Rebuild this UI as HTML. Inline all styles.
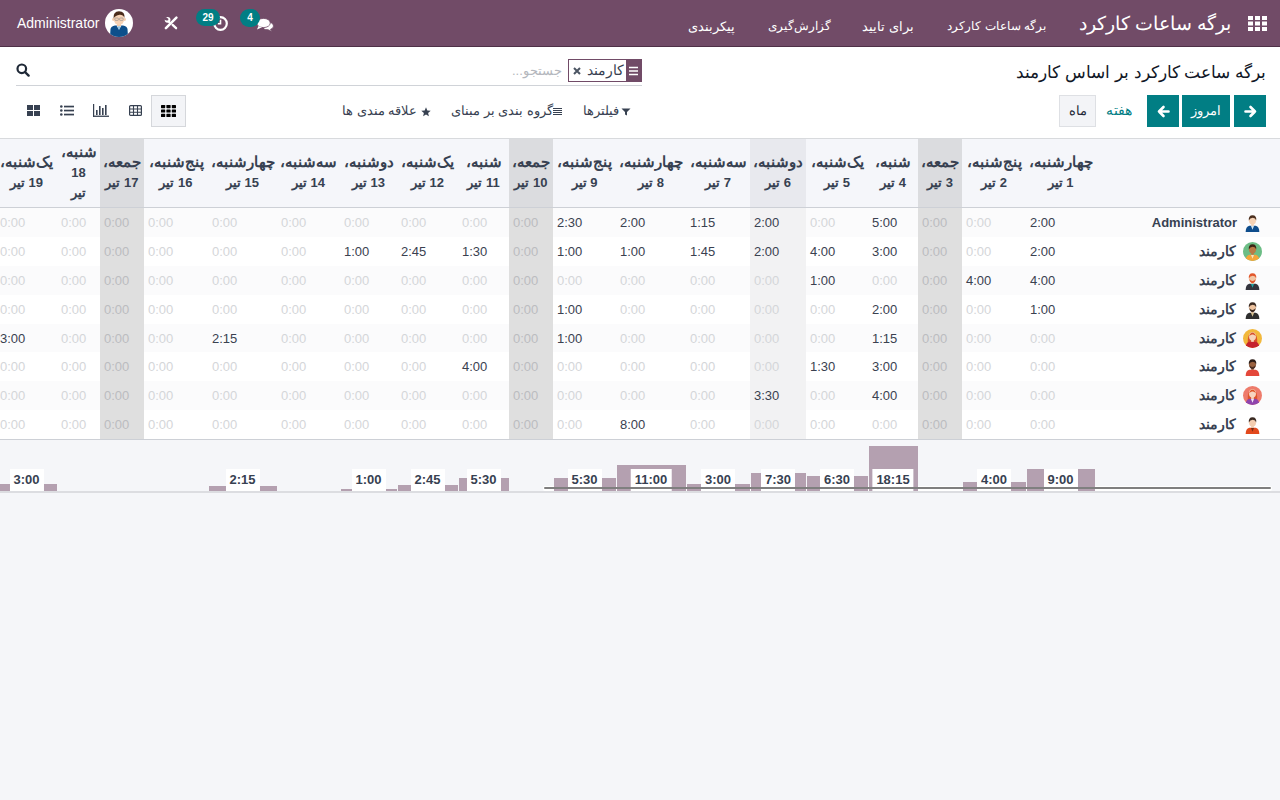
<!DOCTYPE html>
<html lang="fa">
<head>
<meta charset="utf-8">
<style>
*{box-sizing:border-box;margin:0;padding:0}
html,body{width:1280px;height:800px;overflow:hidden}
body{font-family:"Liberation Sans",sans-serif;font-size:13px;color:#374151;background:#f5f6f9;position:relative}
.nav{position:absolute;left:0;top:0;width:1280px;height:47px;background:#714b67;border-bottom:1px solid #4e3047;color:#fff;z-index:2}
.t{position:absolute;white-space:nowrap;line-height:1}
.badge{position:absolute;height:17px;border-radius:9px;background:#017e84;color:#fff;font-size:10px;font-weight:bold;text-align:center;line-height:17px}
.cp{position:absolute;left:0;top:46px;width:1280px;height:92px;background:#fff}
.btn{position:absolute;top:49px;height:32px;background:#017e84;color:#fff;text-align:center;line-height:32px}
.grid{position:absolute;left:0;top:138px;width:1280px;height:355px;background:#fff;border-top:1px solid #d8dadd}
.hd{position:absolute;top:0;height:69px;left:0;width:1280px;background:#f5f6fa;border-bottom:1px solid #cdd0d6}
.col{position:absolute;top:0;height:300px}
.fri{background:#dfdfdf}
.today{background:#f2f2f3}
.th{position:absolute;top:0;height:68px;display:flex;align-items:center;justify-content:center;text-align:center;font-weight:bold;white-space:nowrap;line-height:20px;padding-bottom:2px;color:#374151}
.wd{font-size:15px}
.row{position:absolute;left:0;width:1280px;height:28.875px}
.odd{background:#fbfbfc}
.ov{opacity:1}
.c{position:absolute;height:29px;line-height:29px;white-space:nowrap}
.z{color:#d4d6d9}
.fz{color:#bbbcc0}
.v{color:#3a4150}
.rh{position:absolute;left:1095px;width:185px;height:29px}
.nm{position:absolute;right:44px;top:0;line-height:29px;font-weight:bold;white-space:nowrap;font-size:14px}
.av{position:absolute;left:148px;top:5px}
.foot{position:absolute;left:0;top:300px;width:1280px;height:54px;background:#f5f6f9;border-top:1px solid #cdd0d6;border-bottom:2px solid #dcdde1}
.bar{position:absolute;bottom:-0.2px;background:#b4a0b0}
.lbl{position:absolute;top:29px;height:21.5px;padding:0 4px;transform:translateX(-50%);background:#fff;font-weight:bold;line-height:21px;text-align:center;color:#374151;white-space:nowrap}
.sb{position:absolute;left:544px;top:47px;width:727px;height:2px;border-radius:1px;background:#7f7f7f}
.sbh{position:absolute;left:543px;top:46px;width:729px;height:5px;border-radius:2px;background:#fff}
.a1{background:#fff}
.a2{background:#6fbf85}
.a3{background:#fff}
.a4{background:#fff}
.a5{background:#f0b63a}
.a6{background:#fff}
.a7{background:#ef7f6c}
.a8{background:#fff}
</style>
</head>
<body>
<!-- NAVBAR -->
<div class="nav">
  <div class="t" style="left:17px;top:16px;font-size:14px">Administrator</div>
  <svg style="position:absolute;left:105px;top:9px" width="28" height="28" viewBox="0 0 28 28">
    <circle cx="14" cy="14" r="14" fill="#fff"/>
    <clipPath id="cpa"><circle cx="14" cy="14" r="14"/></clipPath>
    <g clip-path="url(#cpa)">
    <path d="M5 28 L5.5 20 Q6 17 10 16.5 L18 16.5 Q22 17 22.5 20 L23 28 Z" fill="#0d4f8b"/>
    <path d="M11.5 16.5 L14 21 L16.5 16.5 Z" fill="#dfe4ea"/>
    <path d="M13.3 17.5 L14 21 L14.7 17.5 Z" fill="#47a7e0"/>
    <rect x="12" y="13" width="4" height="4" fill="#f3c9a6"/>
    <ellipse cx="8.2" cy="10.5" rx="1" ry="1.4" fill="#f3c9a6"/><ellipse cx="19.8" cy="10.5" rx="1" ry="1.4" fill="#f3c9a6"/>
    <ellipse cx="14" cy="10" rx="5.3" ry="6" fill="#f6d3b6"/>
    <path d="M8.5 9.5 Q8 2.5 14 2.3 Q20.2 2.5 19.5 9 Q18 5.5 14.5 5.8 Q10.5 6.2 8.5 9.5 Z" fill="#4b2d1c"/>
    <rect x="9.8" y="9" width="3.6" height="2.4" rx=".8" fill="none" stroke="#888" stroke-width=".6"/>
    <rect x="14.6" y="9" width="3.6" height="2.4" rx=".8" fill="none" stroke="#888" stroke-width=".6"/>
    </g>
  </svg>
  <svg style="position:absolute;left:164px;top:16px" width="14" height="14" viewBox="0 0 14 14">
    <path d="M1.9 12.1 L12.4 1.6" stroke="#fff" stroke-width="2.5" stroke-linecap="round"/>
    <path d="M8.6 8.9 L12.1 12.2" stroke="#fff" stroke-width="2.3" stroke-linecap="round"/>
    <circle cx="3.6" cy="3.8" r="2.9" fill="#fff"/>
    <path d="M4.2 3.4 L2.4 1.2 L0 1 L0 3.5 L2.2 4.6 Z" fill="#714b67"/>
    <circle cx="3.3" cy="3.4" r="1.1" fill="#714b67"/>
    <path d="M4.5 5.8 L6.2 6.9" stroke="#fff" stroke-width="2" />
  </svg>
  <svg style="position:absolute;left:212px;top:15px" width="17" height="17" viewBox="0 0 17 17">
    <circle cx="8.5" cy="8.5" r="6.3" fill="none" stroke="#fff" stroke-width="2.2"/>
    <path d="M8.5 4.8 V8.8 H5.8" fill="none" stroke="#fff" stroke-width="1.6"/>
  </svg>
  <div class="badge" style="left:196px;top:9px;width:24px">29</div>
  <svg style="position:absolute;left:256px;top:16px" width="18" height="16" viewBox="0 0 18 16">
    <path d="M9.5 6 Q17.5 6 17.5 10 Q17.5 12.5 14.5 13.3 L16 15.5 L12 13.7 Q9.5 13.8 8 13" fill="#fff" stroke="#714b67" stroke-width=".8"/>
    <ellipse cx="7.5" cy="7" rx="6.8" ry="4.6" fill="#fff" stroke="#714b67" stroke-width=".8"/>
    <path d="M2.5 10 L1 13.5 L6 11.3 Z" fill="#fff"/>
  </svg>
  <div class="badge" style="left:240px;top:9px;width:20px;height:18px;line-height:18px">4</div>
  <svg style="position:absolute;left:1248px;top:16px" width="19" height="15" viewBox="0 0 19 15">
    <g fill="#fff">
    <rect x="0" y="0" width="5" height="4"/><rect x="7" y="0" width="5" height="4"/><rect x="14" y="0" width="5" height="4"/>
    <rect x="0" y="5.5" width="5" height="4"/><rect x="7" y="5.5" width="5" height="4"/><rect x="14" y="5.5" width="5" height="4"/>
    <rect x="0" y="11" width="5" height="4"/><rect x="7" y="11" width="5" height="4"/><rect x="14" y="11" width="5" height="4"/>
    </g>
  </svg>
  <div class="t" dir="rtl" style="right:49px;top:15px;font-size:18.6px">برگه ساعات کارکرد</div>
  <div class="t" dir="rtl" style="right:234px;top:20px;font-size:12px">برگه ساعات کارکرد</div>
  <div class="t" dir="rtl" style="right:366px;top:20px;font-size:13px">برای تایید</div>
  <div class="t" dir="rtl" style="right:449px;top:20px;font-size:12px">گزارش‌گیری</div>
  <div class="t" dir="rtl" style="right:545px;top:20px;font-size:13px">پیکربندی</div>
</div>
<!-- CONTROL PANEL -->
<div class="cp">
  <div class="t" dir="rtl" style="right:14px;top:18px;font-size:17px;color:#111827">برگه ساعت کارکرد بر اساس کارمند</div>
  <div class="btn" style="left:1234px;width:32px"><svg style="position:absolute;left:9.5px;top:9.5px" width="13" height="13" viewBox="0 0 13 13"><path d="M1.5 6.5 H11 M6.5 2 L11 6.5 L6.5 11" fill="none" stroke="#fff" stroke-width="2.6" stroke-linejoin="round" stroke-linecap="round"/></svg></div>
  <div class="btn" style="left:1182px;width:48px" dir="rtl">امروز</div>
  <div class="btn" style="left:1147px;width:32px"><svg style="position:absolute;left:9.5px;top:9.5px" width="13" height="13" viewBox="0 0 13 13"><path d="M11.5 6.5 H2 M6.5 2 L2 6.5 L6.5 11" fill="none" stroke="#fff" stroke-width="2.6" stroke-linejoin="round" stroke-linecap="round"/></svg></div>
  <div class="t" dir="rtl" style="left:1106px;top:57px;font-size:14px;color:#017e84">هفته</div>
  <div style="position:absolute;left:1059px;top:49px;width:37px;height:32px;background:#f3f4f7;border:1px solid #dee0e4;text-align:center;line-height:30px;color:#1f2937" dir="rtl">ماه</div>
  <div style="position:absolute;left:16px;top:39px;width:626px;height:1px;background:#d0d3d8"></div>
  <svg style="position:absolute;left:16px;top:17px" width="14" height="14" viewBox="0 0 14 14"><circle cx="5.8" cy="5.8" r="4.3" fill="none" stroke="#1f2937" stroke-width="2.2"/><path d="M9 9 L12.6 12.6" stroke="#1f2937" stroke-width="2.4" stroke-linecap="round"/></svg>
  <div style="position:absolute;left:568px;top:13px;width:74px;height:23px;border:1px solid #714b67;background:#fff"></div>
  <div style="position:absolute;left:626px;top:13px;width:16px;height:23px;background:#714b67"></div>
  <svg style="position:absolute;left:628px;top:20px" width="11" height="10" viewBox="0 0 11 10"><path d="M1 1.5 H10 M1 5 H10 M1 8.5 H10" stroke="#fff" stroke-width="1.6"/></svg>
  <svg style="position:absolute;left:573px;top:21px" width="8" height="8" viewBox="0 0 8 8"><path d="M1 1 L7 7 M7 1 L1 7" stroke="#4b5563" stroke-width="2"/></svg>
  <div class="t" dir="rtl" style="left:587px;top:17px;font-size:14px;color:#374151">کارمند</div>
  <div class="t" dir="rtl" style="left:512px;top:18px;color:#b4b7bd">جستجو...</div>
  <svg style="position:absolute;left:621px;top:62px" width="10" height="8" viewBox="0 0 10 8"><path d="M0.5 0.5 H9.5 L6 4 V7.5 L4 6.5 V4 Z" fill="#374151"/></svg>
  <div class="t" dir="rtl" style="left:583px;top:58px">فیلترها</div>
  <svg style="position:absolute;left:553px;top:62px" width="9" height="8" viewBox="0 0 9 8"><path d="M0 0.5 H9 M0 2.5 H9 M0 4.5 H9 M0 6.5 H9" stroke="#374151" stroke-width="1"/></svg>
  <div class="t" dir="rtl" style="left:451px;top:58px">گروه بندی بر مبنای</div>
  <svg style="position:absolute;left:421px;top:61px" width="10" height="10" viewBox="0 0 10 10"><path d="M5 0.3 L6.3 3.5 L9.7 3.7 L7.1 5.9 L7.9 9.3 L5 7.4 L2.1 9.3 L2.9 5.9 L0.3 3.7 L3.7 3.5 Z" fill="#374151"/></svg>
  <div class="t" dir="rtl" style="left:342px;top:58px">علاقه مندی ها</div>
  <div style="position:absolute;left:151px;top:49px;width:35px;height:32px;background:#f3f4f7;border:1px solid #d5d7db"></div>
  <svg style="position:absolute;left:27px;top:59px" width="13" height="11" viewBox="0 0 13 11"><g fill="#374151"><rect x="0" y="0" width="6" height="5"/><rect x="7" y="0" width="6" height="5"/><rect x="0" y="6" width="6" height="5"/><rect x="7" y="6" width="6" height="5"/></g></svg>
  <svg style="position:absolute;left:60px;top:59px" width="14" height="11" viewBox="0 0 14 11"><g fill="#374151"><circle cx="1.3" cy="1.5" r="1.3"/><circle cx="1.3" cy="5.5" r="1.3"/><circle cx="1.3" cy="9.5" r="1.3"/><rect x="4" y="0.7" width="10" height="1.7"/><rect x="4" y="4.7" width="10" height="1.7"/><rect x="4" y="8.7" width="10" height="1.7"/></g></svg>
  <svg style="position:absolute;left:93px;top:58px" width="16" height="13" viewBox="0 0 16 13"><g fill="#374151"><rect x="0" y="0" width="1.2" height="13"/><rect x="0" y="11.6" width="16" height="1.3"/><rect x="3" y="6" width="1.6" height="5"/><rect x="6" y="2" width="1.6" height="9"/><rect x="9" y="4" width="1.6" height="7"/><rect x="12" y="1" width="1.6" height="10"/></g></svg>
  <svg style="position:absolute;left:129px;top:59px" width="13" height="11" viewBox="0 0 13 11"><rect x="0.6" y="0.6" width="11.8" height="9.8" rx="1" fill="none" stroke="#374151" stroke-width="1.2"/><path d="M0.6 4 H12.4 M0.6 7.2 H12.4 M4.5 0.6 V10.4 M8.5 0.6 V10.4" stroke="#374151" stroke-width="1.1"/></svg>
  <svg style="position:absolute;left:161px;top:59px" width="15" height="12" viewBox="0 0 15 12"><g fill="#000"><rect x="0" y="0" width="4.2" height="3.2" rx=".6"/><rect x="5.4" y="0" width="4.2" height="3.2" rx=".6"/><rect x="10.8" y="0" width="4.2" height="3.2" rx=".6"/><rect x="0" y="4.4" width="4.2" height="3.2" rx=".6"/><rect x="5.4" y="4.4" width="4.2" height="3.2" rx=".6"/><rect x="10.8" y="4.4" width="4.2" height="3.2" rx=".6"/><rect x="0" y="8.8" width="4.2" height="3.2" rx=".6"/><rect x="5.4" y="8.8" width="4.2" height="3.2" rx=".6"/><rect x="10.8" y="8.8" width="4.2" height="3.2" rx=".6"/></g></svg>
</div>
<!-- GRID -->
<div class="grid">
<div class="col fri" style="left:918px;width:44px"></div>
<div class="col today" style="left:750px;width:56px"></div>
<div class="col fri" style="left:509px;width:44px"></div>
<div class="col fri" style="left:100px;width:44px"></div>
<div class="hd"></div>
<div class="th" dir="rtl" style="left:1026px;width:69px;"><div><span class="wd">چهارشنبه،</span><br>1 تیر</div></div>
<div class="th" dir="rtl" style="left:962px;width:64px;"><div><span class="wd">پنج‌شنبه،</span><br>2 تیر</div></div>
<div class="th" dir="rtl" style="left:918px;width:44px;background:#dbdcdf;"><div><span class="wd">جمعه،</span><br>3 تیر</div></div>
<div class="th" dir="rtl" style="left:868px;width:50px;"><div><span class="wd">شنبه،</span><br>4 تیر</div></div>
<div class="th" dir="rtl" style="left:806px;width:62px;"><div><span class="wd">یک‌شنبه،</span><br>5 تیر</div></div>
<div class="th" dir="rtl" style="left:750px;width:56px;background:#e8e9ee;"><div><span class="wd">دوشنبه،</span><br>6 تیر</div></div>
<div class="th" dir="rtl" style="left:686px;width:64px;"><div><span class="wd">سه‌شنبه،</span><br>7 تیر</div></div>
<div class="th" dir="rtl" style="left:616px;width:70px;"><div><span class="wd">چهارشنبه،</span><br>8 تیر</div></div>
<div class="th" dir="rtl" style="left:553px;width:63px;"><div><span class="wd">پنج‌شنبه،</span><br>9 تیر</div></div>
<div class="th" dir="rtl" style="left:509px;width:44px;background:#dbdcdf;"><div><span class="wd">جمعه،</span><br>10 تیر</div></div>
<div class="th" dir="rtl" style="left:458px;width:51px;"><div><span class="wd">شنبه،</span><br>11 تیر</div></div>
<div class="th" dir="rtl" style="left:397px;width:61px;"><div><span class="wd">یک‌شنبه،</span><br>12 تیر</div></div>
<div class="th" dir="rtl" style="left:340px;width:57px;"><div><span class="wd">دوشنبه،</span><br>13 تیر</div></div>
<div class="th" dir="rtl" style="left:277px;width:63px;"><div><span class="wd">سه‌شنبه،</span><br>14 تیر</div></div>
<div class="th" dir="rtl" style="left:208px;width:69px;"><div><span class="wd">چهارشنبه،</span><br>15 تیر</div></div>
<div class="th" dir="rtl" style="left:144px;width:64px;"><div><span class="wd">پنج‌شنبه،</span><br>16 تیر</div></div>
<div class="th" dir="rtl" style="left:100px;width:44px;background:#dbdcdf;"><div><span class="wd">جمعه،</span><br>17 تیر</div></div>
<div class="th" dir="rtl" style="left:57px;width:43px;"><div><span class="wd">شنبه،</span><br>18<br>تیر</div></div>
<div class="th" dir="rtl" style="left:-4px;width:61px;"><div><span class="wd">یک‌شنبه،</span><br>19 تیر</div></div>
<div class="row odd" style="top:69.0px"></div>
<div class="row " style="top:97.875px"></div>
<div class="row odd" style="top:126.75px"></div>
<div class="row " style="top:155.625px"></div>
<div class="row odd" style="top:184.5px"></div>
<div class="row " style="top:213.375px"></div>
<div class="row odd" style="top:242.25px"></div>
<div class="row " style="top:271.125px"></div>
<div class="col fri ov" style="left:918px;width:44px;top:69px;height:231px"></div>
<div class="col today ov" style="left:750px;width:56px;top:69px;height:231px"></div>
<div class="col fri ov" style="left:509px;width:44px;top:69px;height:231px"></div>
<div class="col fri ov" style="left:100px;width:44px;top:69px;height:231px"></div>
<div class="rh" style="top:69.0px"><span class="nm" style="font-size:13px;right:43px">Administrator</span><svg class="av" width="19" height="19" viewBox="0 0 20 20"><g><path d="M2.8 20.5 Q2.6 14.6 6.6 13.4 L13.4 13.4 Q17.4 14.6 17.2 20.5 Z" fill="#0e4d8c"/><path d="M8.3 13.3 L10 17.5 L11.7 13.3 Z" fill="#cfe3f0"/><rect x="8.6" y="10.5" width="2.8" height="3" fill="#f5d2b5"/><ellipse cx="10" cy="7.8" rx="3.7" ry="4.3" fill="#f5d2b5"/><path d="M6.1 8 Q5.6 2.4 10 2.3 Q14.6 2.4 13.9 8 Q13.2 5.2 10.3 5.1 Q7.3 5.3 6.1 8 Z" fill="#4a2e1d"/></g></svg></div>
<div class="c v" style="top:69.0px;left:1030px">2:00</div>
<div class="c z" style="top:69.0px;left:966px">0:00</div>
<div class="c fz" style="top:69.0px;left:922px">0:00</div>
<div class="c v" style="top:69.0px;left:872px">5:00</div>
<div class="c z" style="top:69.0px;left:810px">0:00</div>
<div class="c v" style="top:69.0px;left:754px">2:00</div>
<div class="c v" style="top:69.0px;left:690px">1:15</div>
<div class="c v" style="top:69.0px;left:620px">2:00</div>
<div class="c v" style="top:69.0px;left:557px">2:30</div>
<div class="c fz" style="top:69.0px;left:513px">0:00</div>
<div class="c z" style="top:69.0px;left:462px">0:00</div>
<div class="c z" style="top:69.0px;left:401px">0:00</div>
<div class="c z" style="top:69.0px;left:344px">0:00</div>
<div class="c z" style="top:69.0px;left:281px">0:00</div>
<div class="c z" style="top:69.0px;left:212px">0:00</div>
<div class="c z" style="top:69.0px;left:148px">0:00</div>
<div class="c fz" style="top:69.0px;left:104px">0:00</div>
<div class="c z" style="top:69.0px;left:61px">0:00</div>
<div class="c z" style="top:69.0px;left:0px">0:00</div>
<div class="rh" style="top:97.875px"><span class="nm">کارمند</span><svg class="av" width="19" height="19" viewBox="0 0 20 20"><circle cx="10" cy="10" r="10" fill="#6cbd85"/><clipPath id="avc2"><circle cx="10" cy="10" r="10"/></clipPath><g clip-path="url(#avc2)"><path d="M2.8 20.5 Q2.6 14.6 6.6 13.4 L13.4 13.4 Q17.4 14.6 17.2 20.5 Z" fill="#f4a63a"/><path d="M8.3 13.3 L10 17.5 L11.7 13.3 Z" fill="#f7e0c4"/><rect x="8.6" y="10.5" width="2.8" height="3" fill="#b97a45"/><ellipse cx="10" cy="7.8" rx="3.7" ry="4.3" fill="#b97a45"/><path d="M6.1 8 Q5.6 2.4 10 2.3 Q14.6 2.4 13.9 8 Q13.2 5.2 10.3 5.1 Q7.3 5.3 6.1 8 Z" fill="#3b2414"/></g></svg></div>
<div class="c v" style="top:97.875px;left:1030px">2:00</div>
<div class="c z" style="top:97.875px;left:966px">0:00</div>
<div class="c fz" style="top:97.875px;left:922px">0:00</div>
<div class="c v" style="top:97.875px;left:872px">3:00</div>
<div class="c v" style="top:97.875px;left:810px">4:00</div>
<div class="c v" style="top:97.875px;left:754px">2:00</div>
<div class="c v" style="top:97.875px;left:690px">1:45</div>
<div class="c v" style="top:97.875px;left:620px">1:00</div>
<div class="c v" style="top:97.875px;left:557px">1:00</div>
<div class="c fz" style="top:97.875px;left:513px">0:00</div>
<div class="c v" style="top:97.875px;left:462px">1:30</div>
<div class="c v" style="top:97.875px;left:401px">2:45</div>
<div class="c v" style="top:97.875px;left:344px">1:00</div>
<div class="c z" style="top:97.875px;left:281px">0:00</div>
<div class="c z" style="top:97.875px;left:212px">0:00</div>
<div class="c z" style="top:97.875px;left:148px">0:00</div>
<div class="c fz" style="top:97.875px;left:104px">0:00</div>
<div class="c z" style="top:97.875px;left:61px">0:00</div>
<div class="c z" style="top:97.875px;left:0px">0:00</div>
<div class="rh" style="top:126.75px"><span class="nm">کارمند</span><svg class="av" width="19" height="19" viewBox="0 0 20 20"><g><path d="M2.8 20.5 Q2.6 14.6 6.6 13.4 L13.4 13.4 Q17.4 14.6 17.2 20.5 Z" fill="#33333d"/><path d="M8.3 13.3 L10 17.5 L11.7 13.3 Z" fill="#21a3a3"/><rect x="8.6" y="10.5" width="2.8" height="3" fill="#f2c7a5"/><ellipse cx="10" cy="7.8" rx="3.7" ry="4.3" fill="#f2c7a5"/><path d="M6.8 8.5 Q7 12.6 10 12.8 Q13 12.6 13.2 8.5 Q12 10.5 10 10.5 Q8 10.5 6.8 8.5 Z" fill="#e2572c"/><path d="M6.1 8 Q5.6 2.4 10 2.3 Q14.6 2.4 13.9 8 Q13.2 5.2 10.3 5.1 Q7.3 5.3 6.1 8 Z" fill="#e2572c"/></g></svg></div>
<div class="c v" style="top:126.75px;left:1030px">4:00</div>
<div class="c v" style="top:126.75px;left:966px">4:00</div>
<div class="c fz" style="top:126.75px;left:922px">0:00</div>
<div class="c z" style="top:126.75px;left:872px">0:00</div>
<div class="c v" style="top:126.75px;left:810px">1:00</div>
<div class="c z" style="top:126.75px;left:754px">0:00</div>
<div class="c z" style="top:126.75px;left:690px">0:00</div>
<div class="c z" style="top:126.75px;left:620px">0:00</div>
<div class="c z" style="top:126.75px;left:557px">0:00</div>
<div class="c fz" style="top:126.75px;left:513px">0:00</div>
<div class="c z" style="top:126.75px;left:462px">0:00</div>
<div class="c z" style="top:126.75px;left:401px">0:00</div>
<div class="c z" style="top:126.75px;left:344px">0:00</div>
<div class="c z" style="top:126.75px;left:281px">0:00</div>
<div class="c z" style="top:126.75px;left:212px">0:00</div>
<div class="c z" style="top:126.75px;left:148px">0:00</div>
<div class="c fz" style="top:126.75px;left:104px">0:00</div>
<div class="c z" style="top:126.75px;left:61px">0:00</div>
<div class="c z" style="top:126.75px;left:0px">0:00</div>
<div class="rh" style="top:155.625px"><span class="nm">کارمند</span><svg class="av" width="19" height="19" viewBox="0 0 20 20"><g><path d="M2.8 20.5 Q2.6 14.6 6.6 13.4 L13.4 13.4 Q17.4 14.6 17.2 20.5 Z" fill="#2f2f2f"/><path d="M8.3 13.3 L10 17.5 L11.7 13.3 Z" fill="#d6c08e"/><rect x="8.6" y="10.5" width="2.8" height="3" fill="#eec39f"/><ellipse cx="10" cy="7.8" rx="3.7" ry="4.3" fill="#eec39f"/><path d="M6.8 8.5 Q7 12.6 10 12.8 Q13 12.6 13.2 8.5 Q12 10.5 10 10.5 Q8 10.5 6.8 8.5 Z" fill="#3a2a22"/><path d="M6.1 8 Q5.6 2.4 10 2.3 Q14.6 2.4 13.9 8 Q13.2 5.2 10.3 5.1 Q7.3 5.3 6.1 8 Z" fill="#3a2a22"/></g></svg></div>
<div class="c v" style="top:155.625px;left:1030px">1:00</div>
<div class="c z" style="top:155.625px;left:966px">0:00</div>
<div class="c fz" style="top:155.625px;left:922px">0:00</div>
<div class="c v" style="top:155.625px;left:872px">2:00</div>
<div class="c z" style="top:155.625px;left:810px">0:00</div>
<div class="c z" style="top:155.625px;left:754px">0:00</div>
<div class="c z" style="top:155.625px;left:690px">0:00</div>
<div class="c z" style="top:155.625px;left:620px">0:00</div>
<div class="c v" style="top:155.625px;left:557px">1:00</div>
<div class="c fz" style="top:155.625px;left:513px">0:00</div>
<div class="c z" style="top:155.625px;left:462px">0:00</div>
<div class="c z" style="top:155.625px;left:401px">0:00</div>
<div class="c z" style="top:155.625px;left:344px">0:00</div>
<div class="c z" style="top:155.625px;left:281px">0:00</div>
<div class="c z" style="top:155.625px;left:212px">0:00</div>
<div class="c z" style="top:155.625px;left:148px">0:00</div>
<div class="c fz" style="top:155.625px;left:104px">0:00</div>
<div class="c z" style="top:155.625px;left:61px">0:00</div>
<div class="c z" style="top:155.625px;left:0px">0:00</div>
<div class="rh" style="top:184.5px"><span class="nm">کارمند</span><svg class="av" width="19" height="19" viewBox="0 0 20 20"><circle cx="10" cy="10" r="10" fill="#f2b83c"/><clipPath id="avc5"><circle cx="10" cy="10" r="10"/></clipPath><g clip-path="url(#avc5)"><path d="M5 15 Q4.5 5 10 3.2 Q15.5 5 15 15 Z" fill="#d9532a"/><path d="M2.8 20.5 Q2.6 14.6 6.6 13.4 L13.4 13.4 Q17.4 14.6 17.2 20.5 Z" fill="#c5222d"/><rect x="8.6" y="10.5" width="2.8" height="3" fill="#f6d3bb"/><ellipse cx="10" cy="7.8" rx="3.7" ry="4.3" fill="#f6d3bb"/><path d="M6.6 8 Q7 4 10 4 Q13 4 13.4 8 Q12 5.5 10 5.8 Q8 5.5 6.6 8 Z" fill="#d9532a"/></g></svg></div>
<div class="c z" style="top:184.5px;left:1030px">0:00</div>
<div class="c z" style="top:184.5px;left:966px">0:00</div>
<div class="c fz" style="top:184.5px;left:922px">0:00</div>
<div class="c v" style="top:184.5px;left:872px">1:15</div>
<div class="c z" style="top:184.5px;left:810px">0:00</div>
<div class="c z" style="top:184.5px;left:754px">0:00</div>
<div class="c z" style="top:184.5px;left:690px">0:00</div>
<div class="c z" style="top:184.5px;left:620px">0:00</div>
<div class="c v" style="top:184.5px;left:557px">1:00</div>
<div class="c fz" style="top:184.5px;left:513px">0:00</div>
<div class="c z" style="top:184.5px;left:462px">0:00</div>
<div class="c z" style="top:184.5px;left:401px">0:00</div>
<div class="c z" style="top:184.5px;left:344px">0:00</div>
<div class="c z" style="top:184.5px;left:281px">0:00</div>
<div class="c v" style="top:184.5px;left:212px">2:15</div>
<div class="c z" style="top:184.5px;left:148px">0:00</div>
<div class="c fz" style="top:184.5px;left:104px">0:00</div>
<div class="c z" style="top:184.5px;left:61px">0:00</div>
<div class="c v" style="top:184.5px;left:0px">3:00</div>
<div class="rh" style="top:213.375px"><span class="nm">کارمند</span><svg class="av" width="19" height="19" viewBox="0 0 20 20"><g><path d="M2.8 20.5 Q2.6 14.6 6.6 13.4 L13.4 13.4 Q17.4 14.6 17.2 20.5 Z" fill="#e4473a"/><rect x="8.6" y="10.5" width="2.8" height="3" fill="#9a6240"/><ellipse cx="10" cy="7.8" rx="3.7" ry="4.3" fill="#9a6240"/><path d="M6.8 8.5 Q7 12.6 10 12.8 Q13 12.6 13.2 8.5 Q12 10.5 10 10.5 Q8 10.5 6.8 8.5 Z" fill="#4a2e22"/><path d="M6.1 8 Q5.6 2.4 10 2.3 Q14.6 2.4 13.9 8 Q13.2 5.2 10.3 5.1 Q7.3 5.3 6.1 8 Z" fill="#2c1d17"/></g></svg></div>
<div class="c z" style="top:213.375px;left:1030px">0:00</div>
<div class="c z" style="top:213.375px;left:966px">0:00</div>
<div class="c fz" style="top:213.375px;left:922px">0:00</div>
<div class="c v" style="top:213.375px;left:872px">3:00</div>
<div class="c v" style="top:213.375px;left:810px">1:30</div>
<div class="c z" style="top:213.375px;left:754px">0:00</div>
<div class="c z" style="top:213.375px;left:690px">0:00</div>
<div class="c z" style="top:213.375px;left:620px">0:00</div>
<div class="c z" style="top:213.375px;left:557px">0:00</div>
<div class="c fz" style="top:213.375px;left:513px">0:00</div>
<div class="c v" style="top:213.375px;left:462px">4:00</div>
<div class="c z" style="top:213.375px;left:401px">0:00</div>
<div class="c z" style="top:213.375px;left:344px">0:00</div>
<div class="c z" style="top:213.375px;left:281px">0:00</div>
<div class="c z" style="top:213.375px;left:212px">0:00</div>
<div class="c z" style="top:213.375px;left:148px">0:00</div>
<div class="c fz" style="top:213.375px;left:104px">0:00</div>
<div class="c z" style="top:213.375px;left:61px">0:00</div>
<div class="c z" style="top:213.375px;left:0px">0:00</div>
<div class="rh" style="top:242.25px"><span class="nm">کارمند</span><svg class="av" width="19" height="19" viewBox="0 0 20 20"><circle cx="10" cy="10" r="10" fill="#ee7b6b"/><clipPath id="avc7"><circle cx="10" cy="10" r="10"/></clipPath><g clip-path="url(#avc7)"><path d="M5 15 Q4.5 5 10 3.2 Q15.5 5 15 15 Z" fill="#e0552a"/><path d="M2.8 20.5 Q2.6 14.6 6.6 13.4 L13.4 13.4 Q17.4 14.6 17.2 20.5 Z" fill="#8e44ad"/><path d="M8.3 13.3 L10 17.5 L11.7 13.3 Z" fill="#f0e6f3"/><rect x="8.6" y="10.5" width="2.8" height="3" fill="#f7d5c0"/><ellipse cx="10" cy="7.8" rx="3.7" ry="4.3" fill="#f7d5c0"/><path d="M6.6 8 Q7 4 10 4 Q13 4 13.4 8 Q12 5.5 10 5.8 Q8 5.5 6.6 8 Z" fill="#e0552a"/></g></svg></div>
<div class="c z" style="top:242.25px;left:1030px">0:00</div>
<div class="c z" style="top:242.25px;left:966px">0:00</div>
<div class="c fz" style="top:242.25px;left:922px">0:00</div>
<div class="c v" style="top:242.25px;left:872px">4:00</div>
<div class="c z" style="top:242.25px;left:810px">0:00</div>
<div class="c v" style="top:242.25px;left:754px">3:30</div>
<div class="c z" style="top:242.25px;left:690px">0:00</div>
<div class="c z" style="top:242.25px;left:620px">0:00</div>
<div class="c z" style="top:242.25px;left:557px">0:00</div>
<div class="c fz" style="top:242.25px;left:513px">0:00</div>
<div class="c z" style="top:242.25px;left:462px">0:00</div>
<div class="c z" style="top:242.25px;left:401px">0:00</div>
<div class="c z" style="top:242.25px;left:344px">0:00</div>
<div class="c z" style="top:242.25px;left:281px">0:00</div>
<div class="c z" style="top:242.25px;left:212px">0:00</div>
<div class="c z" style="top:242.25px;left:148px">0:00</div>
<div class="c fz" style="top:242.25px;left:104px">0:00</div>
<div class="c z" style="top:242.25px;left:61px">0:00</div>
<div class="c z" style="top:242.25px;left:0px">0:00</div>
<div class="rh" style="top:271.125px"><span class="nm">کارمند</span><svg class="av" width="19" height="19" viewBox="0 0 20 20"><g><path d="M2.8 20.5 Q2.6 14.6 6.6 13.4 L13.4 13.4 Q17.4 14.6 17.2 20.5 Z" fill="#e2491c"/><path d="M8.3 13.3 L10 17.5 L11.7 13.3 Z" fill="#7a2e14"/><rect x="8.6" y="10.5" width="2.8" height="3" fill="#f3cdb0"/><ellipse cx="10" cy="7.8" rx="3.7" ry="4.3" fill="#f3cdb0"/><path d="M6.1 8 Q5.6 2.4 10 2.3 Q14.6 2.4 13.9 8 Q13.2 5.2 10.3 5.1 Q7.3 5.3 6.1 8 Z" fill="#3a2a22"/></g></svg></div>
<div class="c z" style="top:271.125px;left:1030px">0:00</div>
<div class="c z" style="top:271.125px;left:966px">0:00</div>
<div class="c fz" style="top:271.125px;left:922px">0:00</div>
<div class="c z" style="top:271.125px;left:872px">0:00</div>
<div class="c z" style="top:271.125px;left:810px">0:00</div>
<div class="c z" style="top:271.125px;left:754px">0:00</div>
<div class="c z" style="top:271.125px;left:690px">0:00</div>
<div class="c v" style="top:271.125px;left:620px">8:00</div>
<div class="c z" style="top:271.125px;left:557px">0:00</div>
<div class="c fz" style="top:271.125px;left:513px">0:00</div>
<div class="c z" style="top:271.125px;left:462px">0:00</div>
<div class="c z" style="top:271.125px;left:401px">0:00</div>
<div class="c z" style="top:271.125px;left:344px">0:00</div>
<div class="c z" style="top:271.125px;left:281px">0:00</div>
<div class="c z" style="top:271.125px;left:212px">0:00</div>
<div class="c z" style="top:271.125px;left:148px">0:00</div>
<div class="c fz" style="top:271.125px;left:104px">0:00</div>
<div class="c z" style="top:271.125px;left:61px">0:00</div>
<div class="c z" style="top:271.125px;left:0px">0:00</div>
<div class="foot"><div class="sbh"></div>
<div class="bar" style="left:1027px;width:67.5px;height:21.8px"></div>
<div class="lbl" style="left:1060.5px">9:00</div>
<div class="bar" style="left:963px;width:62.5px;height:9.7px"></div>
<div class="lbl" style="left:994.0px">4:00</div>
<div class="bar" style="left:869px;width:48.5px;height:45.7px"></div>
<div class="lbl" style="left:893.0px">18:15</div>
<div class="bar" style="left:807px;width:60.5px;height:15.7px"></div>
<div class="lbl" style="left:837.0px">6:30</div>
<div class="bar" style="left:751px;width:54.5px;height:18.1px"></div>
<div class="lbl" style="left:778.0px">7:30</div>
<div class="bar" style="left:687px;width:62.5px;height:7.3px"></div>
<div class="lbl" style="left:718.0px">3:00</div>
<div class="bar" style="left:617px;width:68.5px;height:26.6px"></div>
<div class="lbl" style="left:651.0px">11:00</div>
<div class="bar" style="left:554px;width:61.5px;height:13.3px"></div>
<div class="lbl" style="left:584.5px">5:30</div>
<div class="bar" style="left:459px;width:49.5px;height:13.3px"></div>
<div class="lbl" style="left:483.5px">5:30</div>
<div class="bar" style="left:398px;width:59.5px;height:6.7px"></div>
<div class="lbl" style="left:427.5px">2:45</div>
<div class="bar" style="left:341px;width:55.5px;height:2.4px"></div>
<div class="lbl" style="left:368.5px">1:00</div>
<div class="bar" style="left:209px;width:67.5px;height:5.4px"></div>
<div class="lbl" style="left:242.5px">2:15</div>
<div class="bar" style="left:-3px;width:59.5px;height:7.3px"></div>
<div class="lbl" style="left:26.5px">3:00</div>
<div class="sb"></div>
</div>
</div>
</body>
</html>
